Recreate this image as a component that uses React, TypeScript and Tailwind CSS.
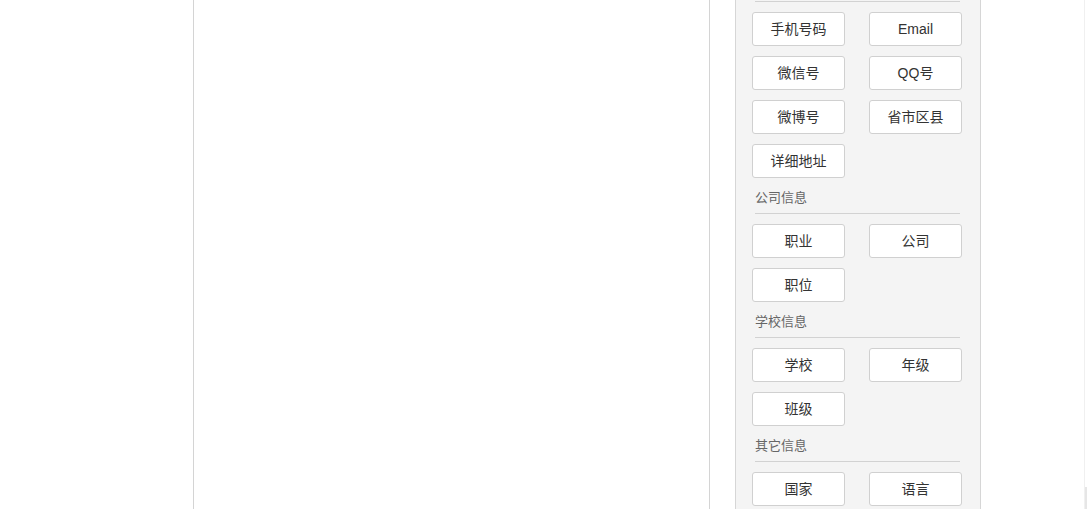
const sections: { title?: string; fields: string[] }[] = [
  { fields: ["手机号码", "Email", "微信号", "QQ号", "微博号", "省市区县", "详细地址"] },
  { title: "公司信息", fields: ["职业", "公司", "职位"] },
  { title: "学校信息", fields: ["学校", "年级", "班级"] },
  { title: "其它信息", fields: ["国家", "语言"] },
];

const font = { fontFamily: '"Liberation Sans", "Noto Sans CJK SC", Arial, sans-serif' };

export default function App() {
  return (
    <div className="flex h-[509px] w-[1087px] overflow-hidden bg-white" style={font}>
      {/* left blank */}
      <div className="w-[193px] shrink-0" />

      {/* canvas */}
      <div className="w-[517px] shrink-0 border-x border-[#d4d4d4] bg-white" />

      <div className="w-[25px] shrink-0" />

      {/* field panel */}
      <div className="w-[246px] shrink-0 border-x border-[#d6d6d6] bg-[#f4f4f4] pl-[16px] pr-[17px]">
        {sections.map((s, i) => (
          <div key={i}>
            {s.title ? (
              <div className="mx-[3px] mt-[10px] border-b border-[#d2d2d2] pb-[5px] text-[13px] leading-[20px] text-[#666]">
                {s.title}
              </div>
            ) : (
              <div className="mx-[3px] mt-[1px] h-px bg-[#d2d2d2]" />
            )}
            <div className="mt-[10px] grid grid-cols-[93px_93px] gap-x-[24px] gap-y-[10px]">
              {s.fields.map((f) => (
                <button
                  key={f}
                  className="h-[34px] rounded-[3px] border border-[#d0d0d0] bg-white text-[14px] text-[#333]"
                >
                  {f}
                </button>
              ))}
            </div>
          </div>
        ))}
      </div>

      {/* right area */}
      <div className="flex-1" />
      <div className="flex w-[3px] shrink-0 flex-col border-l border-[#f0f0f0]">
        <div className="flex-1" />
        <div className="h-[22px] bg-[#e6e6e6]" />
      </div>
    </div>
  );
}
